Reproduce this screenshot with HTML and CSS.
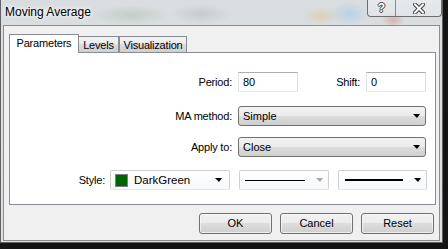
FILE: index.html
```html
<!DOCTYPE html>
<html lang="en">
<head>
  <meta charset="UTF-8" />
  <title>Moving Average</title>
  <link rel="stylesheet" href="styles.css">
</head>
<body>
  <div class="window">
    <div class="titlebar">
      <span class="title">Moving Average</span>
      <div class="caption">
        <span class="cap-btn help">?</span>
        <span class="cap-btn close">
          <svg width="12" height="11" viewBox="0 0 12 11">
            <path d="M2 1.5 L10 9.5 M10 1.5 L2 9.5" stroke="#3b3b3b" stroke-width="4" stroke-linecap="square" />
            <path d="M2 1.5 L10 9.5 M10 1.5 L2 9.5" stroke="#fff" stroke-width="2" stroke-linecap="square" />
          </svg>
        </span>
      </div>
    </div>

    <div class="client">
      <div class="tabs">
        <span class="tab active">Parameters</span>
        <span class="tab levels">Levels</span>
        <span class="tab vis">Visualization</span>
      </div>

      <div class="panel">
        <div class="row r1">
          <span class="lbl">Period:</span>
          <span class="edit">80</span>
          <span class="lbl shift">Shift:</span>
          <span class="edit">0</span>
        </div>
        <div class="row r2">
          <span class="lbl">MA method:</span>
          <span class="combo"><span class="val">Simple</span><span class="arrow"></span></span>
        </div>
        <div class="row r3">
          <span class="lbl">Apply to:</span>
          <span class="combo"><span class="val">Close</span><span class="arrow"></span></span>
        </div>
        <div class="row r4">
          <span class="lbl style">Style:</span>
          <span class="pick color">
            <span class="swatch"></span>
            <span class="val">DarkGreen</span>
            <span class="arrow"></span>
          </span>
          <span class="pick line">
            <span class="sample thin"></span>
            <span class="arrow off"></span>
          </span>
          <span class="pick width">
            <span class="sample thick"></span>
            <span class="arrow"></span>
          </span>
        </div>
      </div>

      <div class="buttons">
        <span class="btn">OK</span>
        <span class="btn">Cancel</span>
        <span class="btn">Reset</span>
      </div>
    </div>
  </div>
</body>
</html>
```

FILE: styles.css
```css
* {
  margin: 0;
  padding: 0;
  box-sizing: border-box;
}

html, body {
  height: 100%;
  overflow: hidden;
}

body {
  background: #141414;
  font-family: 'Liberation Sans', Arial, sans-serif;
  font-size: 11px;
  color: #000;
}

.window {
  width: 443px;
  height: 243px;
  border: 1px solid #5f6163;
  border-top: none;
  background:
    radial-gradient(ellipse 40px 10px at 130px 15px, rgba(130, 160, 120, 0.25), transparent),
    radial-gradient(ellipse 30px 10px at 200px 14px, rgba(150, 150, 150, 0.25), transparent),
    radial-gradient(ellipse 18px 10px at 320px 16px, rgba(220, 190, 120, 0.4), transparent),
    radial-gradient(ellipse 20px 12px at 348px 14px, rgba(140, 190, 230, 0.4), transparent),
    radial-gradient(ellipse 12px 8px at 392px 20px, rgba(200, 120, 100, 0.4), transparent),
    linear-gradient(#d9dde0, #dde1e4);
}

.titlebar {
  height: 25px;
  display: flex;
  align-items: flex-start;
}

.title {
  padding: 5px 0 0 4px;
  font-size: 12px;
  line-height: 14px;
  text-shadow: 0 0 4px #fff, 0 0 6px #fff;
}

.caption {
  margin-left: auto;
  display: flex;
  height: 17px;
  border: 1px solid #6e6e6e;
  border-top: none;
  border-radius: 0 0 4px 4px;
  background: linear-gradient(rgba(255, 255, 255, 0.35), rgba(230, 234, 238, 0.6));
}

.cap-btn {
  display: flex;
  align-items: center;
  justify-content: center;
  height: 16px;
}

.help {
  width: 28px;
  border-right: 1px solid #8a8a8a;
  font-weight: bold;
  font-size: 12px;
  color: #fff;
  text-shadow: 1px 0 #444, -1px 0 #444, 0 1px #444, 0 -1px #444;
}

.close {
  width: 45px;
}

.client {
  height: 216px;
  margin: 0 2px;
  border: 1px solid #8d8d8d;
  background: #f0f0f0;
  padding: 8px 3px 0 5px;
}

.tabs {
  display: flex;
  align-items: flex-end;
  height: 19px;
}

.tab {
  height: 16px;
  margin-bottom: 1px;
  border: 1px solid #898c95;
  border-bottom: none;
  background: linear-gradient(#f2f2f2, #ebebeb 50%, #dddddd 50%, #cfcfcf);
  text-align: center;
  line-height: 14px;
  letter-spacing: -0.2px;
}

.tab.active {
  position: relative;
  height: 19px;
  width: 70px;
  margin-bottom: 0;
  background: #fff;
  line-height: 14px;
  padding-top: 1px;
}

.tab.levels {
  width: 41px;
  margin-left: -1px;
  padding-top: 1px;
}

.tab.vis {
  width: 68px;
  padding-top: 1px;
}

.panel {
  margin-top: -1px;
  width: 427px;
  height: 153px;
  border: 1px solid #898c95;
  background: #fff;
  padding: 19px 0 0 0;
}

.row {
  display: flex;
  align-items: center;
  height: 20px;
}

.r2 { margin-top: 14px; }
.r3 { margin-top: 11px; }
.r4 { margin-top: 13px; }

.lbl {
  width: 222px;
  margin-right: 6px;
  text-align: right;
  letter-spacing: -0.2px;
}

.lbl.shift {
  width: 62px;
}

.lbl.style {
  width: 95px;
  margin-right: 5px;
}

.edit {
  width: 60px;
  height: 20px;
  border: 1px solid;
  border-color: #abadb3 #dbdfe6 #e3e9ef #e2e3ea;
  background: #fff;
  padding-left: 4px;
  line-height: 18px;
}

.combo {
  display: flex;
  align-items: center;
  width: 188px;
  height: 20px;
  border: 1px solid #707070;
  border-radius: 3px;
  background: linear-gradient(#f2f2f2, #ebebeb 50%, #dddddd 50%, #cfcfcf);
  padding: 0 5px 0 4px;
}

.val {
  flex: 1;
}

.arrow {
  width: 0;
  height: 0;
  border-left: 4px solid transparent;
  border-right: 3px solid transparent;
  border-top: 4px solid #000;
}

.arrow.off {
  border-top-color: #a9a9a9;
}

.pick {
  display: flex;
  align-items: center;
  height: 20px;
  border: 1px solid #cdd0d5;
  border-bottom-color: #dfe6ee;
  border-radius: 2px;
  background: linear-gradient(#ffffff, #f7f8fa);
}

.pick.color {
  width: 120px;
  padding: 0 7px 0 4px;
  font-size: 11.5px;
}

.pick.line {
  width: 90px;
  margin-left: 9px;
  padding: 0 5px 0 5px;
}

.pick.width {
  width: 89px;
  margin-left: 9px;
  padding: 0 5px 0 6px;
}

.swatch {
  width: 13px;
  height: 13px;
  border: 1px solid #808080;
  background: #006400;
  margin-right: 6px;
}

.sample {
  flex: 1;
  background: #000;
  margin-right: 11px;
}

.sample.thin { height: 1px; }
.sample.thick { height: 2px; }

.buttons {
  display: flex;
  justify-content: flex-end;
  gap: 8px;
  margin-top: 8px;
  padding-right: 2px;
}

.btn {
  width: 73px;
  height: 21px;
  border: 1px solid #707070;
  border-radius: 3px;
  background: linear-gradient(#f2f2f2, #ebebeb 50%, #dddddd 50%, #cfcfcf);
  box-shadow: inset 0 0 0 1px rgba(255, 255, 255, 0.6);
  text-align: center;
  line-height: 19px;
}
```
